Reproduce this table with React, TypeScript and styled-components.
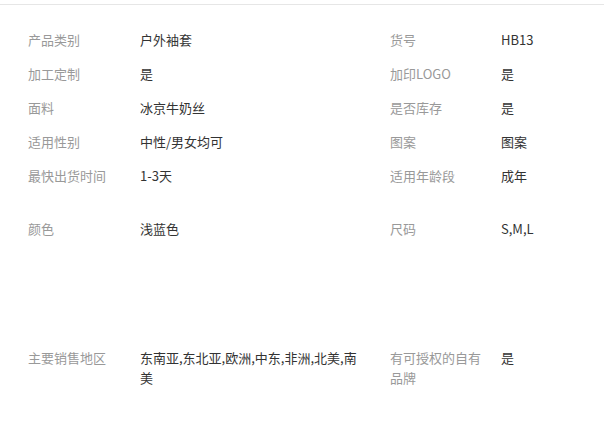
import styled, { createGlobalStyle } from "styled-components";

const GlobalStyle = createGlobalStyle`
  html, body {
    margin: 0;
    padding: 0;
    background: #fff;
  }
  body {
    font-family: "Noto Sans CJK SC", "Noto Sans", sans-serif;
    font-size: 13px;
  }
`;

type Attr = { label: string; value: string };
type Pair = [Attr, Attr];

const mainGroup: Pair[] = [
  [
    { label: "产品类别", value: "户外袖套" },
    { label: "货号", value: "HB13" },
  ],
  [
    { label: "加工定制", value: "是" },
    { label: "加印LOGO", value: "是" },
  ],
  [
    { label: "面料", value: "冰京牛奶丝" },
    { label: "是否库存", value: "是" },
  ],
  [
    { label: "适用性别", value: "中性/男女均可" },
    { label: "图案", value: "图案" },
  ],
  [
    { label: "最快出货时间", value: "1-3天" },
    { label: "适用年龄段", value: "成年" },
  ],
];

const skuGroup: Pair[] = [
  [
    { label: "颜色", value: "浅蓝色" },
    { label: "尺码", value: "S,M,L" },
  ],
];

const extraGroup: Pair[] = [
  [
    { label: "主要销售地区", value: "东南亚,东北亚,欧洲,中东,非洲,北美,南美" },
    { label: "有可授权的自有品牌", value: "是" },
  ],
];

const Rule = styled.div`
  margin-top: 4px;
  border-top: 1px solid #e6e6e6;
`;

const Sheet = styled.div`
  padding-top: 18px;
`;

const Group = styled.div<{ $gap?: number }>`
  margin-top: ${(p) => p.$gap ?? 0}px;
`;

const Row = styled.div<{ $minHeight?: number }>`
  display: grid;
  grid-template-columns: 112px 250px 111px 1fr;
  align-items: start;
  padding: 7px 0 7px 28px;
  min-height: ${(p) => (p.$minHeight ? `${p.$minHeight - 14}px` : "auto")};
  line-height: 20px;
`;

const Label = styled.div`
  color: #999;
  padding-right: 10px;
`;

const Value = styled.div`
  color: #333;
  padding-right: 25px;
`;

const AttrRow = ({ pair, minHeight }: { pair: Pair; minHeight?: number }) => (
  <Row $minHeight={minHeight}>
    <Label>{pair[0].label}</Label>
    <Value>{pair[0].value}</Value>
    <Label>{pair[1].label}</Label>
    <Value>{pair[1].value}</Value>
  </Row>
);

export default function App() {
  return (
    <>
      <GlobalStyle />
      <Rule />
      <Sheet>
        <Group>
          {mainGroup.map((pair) => (
            <AttrRow key={pair[0].label} pair={pair} />
          ))}
        </Group>
        <Group $gap={19}>
          {skuGroup.map((pair) => (
            <AttrRow key={pair[0].label} pair={pair} minHeight={129} />
          ))}
        </Group>
        <Group>
          {extraGroup.map((pair) => (
            <AttrRow key={pair[0].label} pair={pair} />
          ))}
        </Group>
      </Sheet>
    </>
  );
}
